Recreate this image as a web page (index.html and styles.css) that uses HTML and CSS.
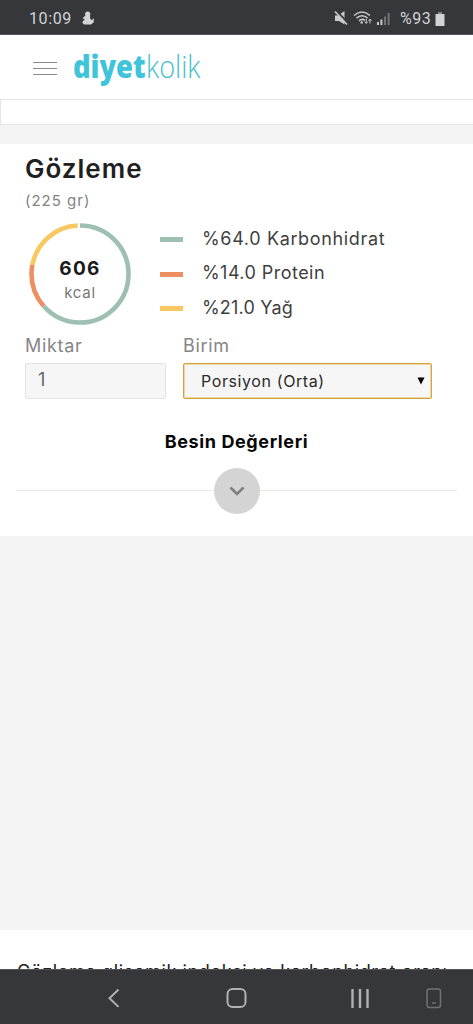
FILE: index.html
```html
<!DOCTYPE html>
<html lang="tr">
<head>
<meta charset="utf-8">
<meta name="viewport" content="width=device-width">
<title>Diyetkolik</title>
<link rel="stylesheet" href="styles.css">
</head>
<body>
<div class="screen">
  <div class="status">
    <span class="time">10:09</span>
    <svg class="figure" width="14" height="14" viewBox="0 0 14 14" fill="#d2d3d6"><circle cx="6.7" cy="3" r="2.6"/><path d="M4.500 4.500 9 4.200 9.200 7.500 10.500 9 11.500 9 11.800 7.500 13 8 12.500 11.500 10 13.500H3L1.200 11.500 2.500 9.500 4 8.700 1.800 7.500 2.500 6.300Z"/></svg>
    <svg class="signals" width="60" height="18" viewBox="0 0 60 18">
      <path d="M1 6.500h3L10.500 2v13.500L5 12H1Z" fill="#c9cacd"/><path d="M1.500 1 14 14" stroke="#36373b" stroke-width="2"/><path d="M1 2.500 13 15.500" stroke="#c9cacd" stroke-width="1.600"/>
      <g fill="none" stroke="#c9cacd" stroke-width="1.6"><path d="M20 6.500Q28-.5 36 6.500M22.500 9.200Q28 4.300 33.500 9.200M25 11.800Q28 9 31 11.500"/></g>
      <circle cx="27.7" cy="13.500" r="1.300" fill="#c9cacd"/>
      <path d="M32.300 10v4M30.800 12.800l1.500 1.700 1.500-1.700M36 14.500v-4M34.500 11.800 36 10l1.500 1.800" stroke="#c9cacd" fill="none"/>
      <path d="M43 13h2v3h-2zM46.400 10.500h2V16h-2z" fill="#c9cacd"/><path d="M50 7.500h2V16h-2zM53.600 4h2v12h-2z" fill="#737478"/>
    </svg>
    <span class="percent">%93</span>
    <svg class="battery" width="10" height="14" viewBox="0 0 10 14"><path d="M3 0h4v2h2.500v12h-9V2H3Z" fill="#d2d3d6"/><path d="M3 0h4v2H3z" fill="#85868a"/></svg>
  </div>
  <header class="header">
    <div class="menu"><i></i><i></i><i></i></div>
    <svg class="logo" width="130" height="56" viewBox="0 0 130 56">
      <text class="logo-bold" x="0" y="37" textLength="72.500" lengthAdjust="spacingAndGlyphs">diyet</text>
      <text class="logo-thin" x="73" y="37" textLength="54.500" lengthAdjust="spacingAndGlyphs">kolik</text>
    </svg>
  </header>
  <div class="strip"></div>
  <main class="card">
    <h1 class="title">Gözleme</h1>
    <div class="grams">(225 gr)</div>
    <section class="macros">
      <div class="ring">
        <svg width="104" height="104" viewBox="0 0 104 104" fill="none" stroke-width="4.6">
          <g transform="rotate(-90 52 52)">
            <circle cx="52" cy="52" r="48.500" pathLength="100" stroke="#9dc0b3" stroke-dasharray="63.500 36.500"/>
            <circle cx="52" cy="52" r="48.500" pathLength="100" stroke="#ee8f62" stroke-dasharray="14.500 85.500" stroke-dashoffset="-63.500"/>
            <circle cx="52" cy="52" r="48.500" pathLength="100" stroke="#f8c863" stroke-dasharray="21.200 78.800" stroke-dashoffset="-78"/>
          </g>
        </svg>
        <div class="ring-text"><b>606</b><span>kcal</span></div>
      </div>
      <ul class="legend">
        <li><i class="carb"></i><span class="l1">%64.0 Karbonhidrat</span></li>
        <li><i class="protein"></i><span class="l2">%14.0 Protein</span></li>
        <li><i class="fat"></i><span class="l3">%21.0 Yağ</span></li>
      </ul>
    </section>
    <section class="form">
      <div class="amount"><label>Miktar</label><div class="input">1</div></div>
      <div class="unit"><label>Birim</label><div class="select"><span>Porsiyon (Orta)</span><svg width="8" height="8" viewBox="0 0 8 8"><path d="M.5.500h7L4 7.500Z"/></svg></div></div>
    </section>
    <h2 class="facts">Besin Değerleri</h2>
    <div class="divider"><span class="toggle"><svg width="18" height="12" viewBox="0 0 18 12"><path d="m2.500 2.500 6.500 6.500 6.500-6.500" fill="none" stroke="#7e7e7e" stroke-width="2.600"/></svg></span></div>
  </main>
  <div class="blank"></div>
  <section class="article"><p>Gözleme glisemik indeksi ve karbonhidrat oranı</p></section>
  <nav class="nav">
    <svg width="473" height="56" viewBox="0 0 473 56" fill="none" stroke="#b0b1b5" stroke-width="2">
      <path d="m118.500 19.500-9 8.700 9 8.700"/>
      <rect x="227.500" y="19" width="18" height="18" rx="5"/>
      <path d="M352.500 19v19M360 19v19M367.500 19v19" stroke-width="2.400"/>
      <g stroke="#707175" stroke-width="1.500"><rect x="427" y="19" width="13.500" height="18.500" rx="2.500"/><path d="M432 33h4"/></g>
    </svg>
  </nav>
</div>
</body>
</html>
```
FILE: styles.css
```css
* { box-sizing: border-box; }
body { margin: 0; background: #f4f4f4; font-family: Inter, "Noto Sans", sans-serif; }
.screen { width: 473px; height: 1024px; overflow: hidden; display: flex; flex-direction: column; background: #f4f4f4; }
.screen > * { flex: none; }
svg { display: block; flex: none; }

.status { height: 35px; padding: 0 28px 0 29px; display: flex; align-items: center; background: #36373b; border-bottom: 1px solid #55565a; color: #d2d3d6; font: 16px/36px Roboto, sans-serif; }
.time { width: 43px; letter-spacing: .6px; padding-top: 3px; }
.figure { margin: 2px auto 0 9px; }
.signals { margin: 2px 6px 0 0; }
.percent { width: 33px; padding-top: 3px; margin-right: 2px; letter-spacing: .5px; white-space: nowrap; }
.battery { margin-top: 3px; }

.header { height: 64px; display: flex; padding-left: 33px; background: #fff; }
.menu { width: 24px; padding-top: 27px; display: flex; flex-direction: column; gap: 5px; }
.menu i { height: 1px; background: #8a8a8a; }
.logo { margin: 6px 0 0 16px; font-family: "Open Sans", "Noto Sans", sans-serif; }
.logo-bold { font-size: 32px; font-weight: 800; fill: #3fc4d9; }
.logo-thin { font-size: 32px; font-weight: 300; fill: #45bfcc; }

.strip { height: 26px; margin-bottom: 19px; background: #fff; border: 1px solid #e5e5e5; border-width: 1px 0 1px 1px; }

.card { height: 392px; background: #fff; }
.title { margin: 0; padding: 8px 0 0 25px; font-size: 26px; line-height: 34px; font-weight: 600; letter-spacing: 1px; color: #202020; }
.grams { padding: 5px 0 0 25px; font-size: 15px; line-height: 20px; letter-spacing: 1px; color: #838383; }
.macros { display: flex; height: 120px; padding: 11px 0 0 28px; }
.ring { display: grid; width: 104px; height: 104px; }
.ring > * { grid-area: 1 / 1; }
.ring-text { display: flex; flex-direction: column; align-items: center; padding-top: 35px; }
.ring-text b { font-size: 19px; font-weight: 700; line-height: 24px; letter-spacing: 1.3px; color: #1b1b1b; }
.ring-text span { font-size: 15px; line-height: 24px; letter-spacing: .7px; color: #777; }
.legend { list-style: none; margin: 0 0 0 28px; padding: 0; }
.legend li { height: 34.500px; display: flex; align-items: center; font-size: 18px; color: #3f3f3f; white-space: nowrap; }
.legend li span { margin-top: -2px; }
.legend i { width: 23px; height: 5px; margin: 1px 19px 0 0; }
.carb { background: #9dc0b3; }
.protein { background: #ee8f62; }
.fat { background: #f8c863; }
.l1 { letter-spacing: .65px; }
.l2 { letter-spacing: .45px; }
.l3 { letter-spacing: .2px; }

.form { display: flex; gap: 17px; padding-left: 25px; }
.form label { display: block; height: 32px; font-size: 18px; line-height: 30px; letter-spacing: .7px; color: #858585; }
.amount { width: 141px; }
.unit { width: 249px; }
.input, .select { height: 36px; background: #f6f6f6; border: 1px solid #e4e4e4; border-radius: 2px; }
.input { padding-left: 12px; font-size: 18px; line-height: 32px; color: #666; }
.select { display: flex; align-items: center; justify-content: space-between; padding: 0 6px 0 17px; border: 1px solid #d2a43e; box-shadow: inset 0 0 0 1px #ecd79e; font-size: 16px; letter-spacing: .6px; color: #2b2b2b; }

.facts { margin: 31px 0 0; font-size: 18px; line-height: 24px; font-weight: 700; letter-spacing: .6px; text-align: center; color: #070707; }
.divider { height: 46px; margin: 14px 16px 0; display: flex; justify-content: center; background: linear-gradient(#e9e7df, #e9e7df) 0 22px / 100% 1px no-repeat; }
.toggle { width: 46px; height: 46px; border-radius: 50%; display: flex; align-items: center; justify-content: center; background: #d4d4d4; }

.blank { height: 394px; }
.article { height: 39px; overflow: hidden; background: #fff; }
.article p { margin: 0; padding: 30px 0 0 17px; font-size: 18px; line-height: 24px; letter-spacing: .63px; white-space: nowrap; color: #202020; }
.nav { height: 55px; background: #36373b; border-top: 1px solid #55565a; }
```
